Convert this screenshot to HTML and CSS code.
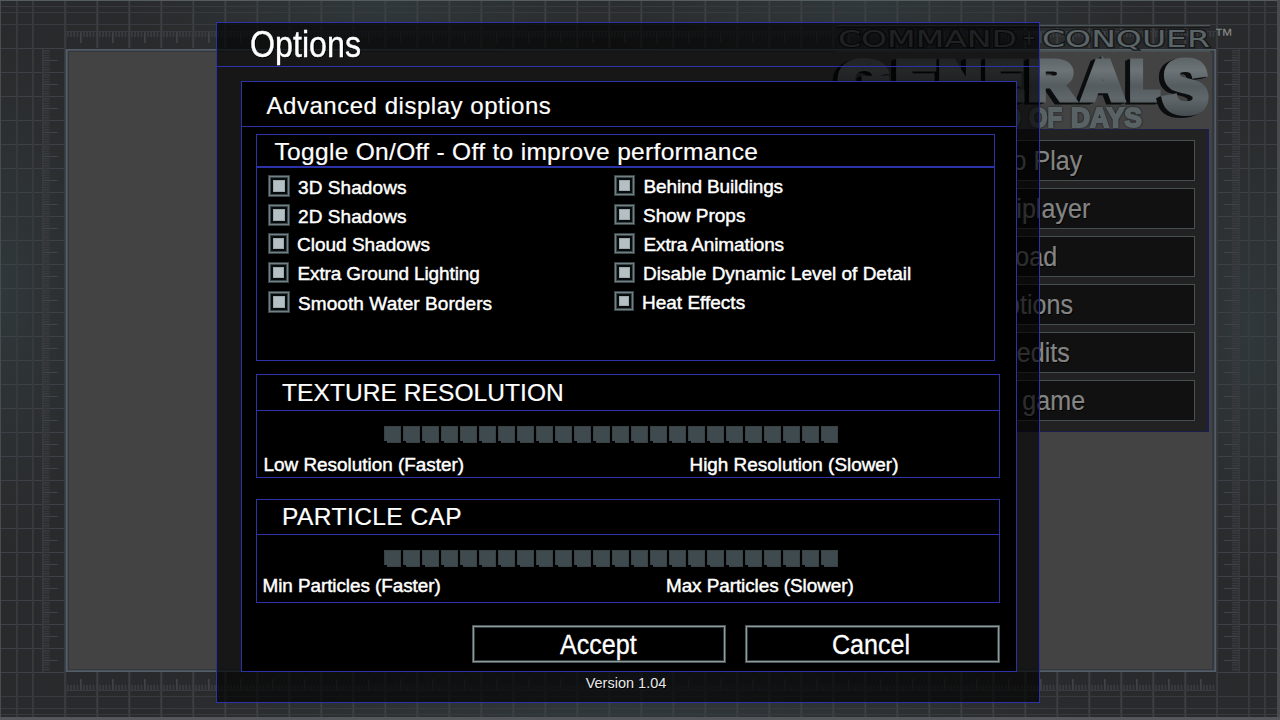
FILE: index.html
```html
<!DOCTYPE html>
<html lang="en">
<head>
<meta charset="utf-8">
<title>Options</title>
<link rel="stylesheet" href="styles.css">
</head>
<body>
<div class="screen">
  <svg class="backdrop" width="1280" height="720" viewBox="0 0 1280 720" aria-hidden="true">
    <defs>
      <pattern id="cols" x="64" y="0" width="32" height="48" patternUnits="userSpaceOnUse"><rect x="0.4" width="1.8" height="48" fill="#3c4043"/></pattern>
      <pattern id="rows" x="0" y="0" width="66" height="24" patternUnits="userSpaceOnUse"><rect width="66" height="1" fill="#3d4046"/></pattern>
      <pattern id="tickX" x="67" y="0" width="3.2" height="6" patternUnits="userSpaceOnUse"><rect width="1.6" height="6" fill="#393b40"/></pattern>
      <pattern id="bigX" x="80" y="0" width="32" height="720" patternUnits="userSpaceOnUse"><rect width="1.6" height="720" fill="#3f4248"/></pattern>
      <pattern id="tickY" x="0" y="50" width="8" height="2.4" patternUnits="userSpaceOnUse"><rect width="8" height="1.2" fill="#3a3c42"/></pattern>
      <pattern id="bigY" x="0" y="60" width="20" height="24" patternUnits="userSpaceOnUse"><rect width="20" height="1" fill="#40434a"/></pattern>
      <radialGradient id="tint" gradientUnits="userSpaceOnUse" cx="0" cy="0" r="1"><stop offset="0" stop-color="#30383b"/><stop offset="1" stop-color="#30383b" stop-opacity="0"/></radialGradient>
    </defs>
    <rect width="1280" height="720" fill="#292a2b"/>
    <g fill="url(#tint)">
      <circle r="1" transform="translate(380 0) scale(260 90)"/>
      <circle r="1" transform="translate(860 0) scale(300 90)"/>
      <circle r="1" transform="translate(0 290) scale(110 260)"/>
      <circle r="1" transform="translate(1250 330) scale(100 240)"/>
      <circle r="1" transform="translate(620 720) scale(480 80)"/>
    </g>
    <rect x="64" width="1154" height="48" fill="url(#cols)"/>
    <rect x="64" y="672" width="1154" height="48" fill="url(#cols)"/>
    <rect y="24" width="66" height="696" fill="url(#rows)"/>
    <rect x="1216" y="24" width="64" height="696" fill="url(#rows)"/>
    <g fill="#373b3f">
      <rect x="16" width="1.8" height="720"/><rect x="32" width="1.8" height="720"/><rect x="64" width="1.8" height="720"/>
      <rect x="1216" width="1.8" height="720"/><rect x="1248" width="1.8" height="720"/><rect x="1264" width="1.8" height="720"/>
      <rect y="6" width="1280" height="1"/><rect y="12" width="1280" height="1"/><rect y="24" width="1280" height="1"/>
      <rect y="696" width="1280" height="1"/><rect y="708" width="1280" height="1"/><rect y="714" width="1280" height="1"/>
      <rect x="65" y="31" width="1151" height="1"/><rect x="65" y="690" width="1151" height="1"/>
      <rect x="42" y="49" width="1.4" height="623"/><rect x="1238.5" y="49" width="1.4" height="623"/>
    </g>
    <rect x="67" y="32" width="1148" height="5" fill="url(#tickX)"/>
    <rect x="67" y="32" width="1148" height="11" fill="url(#bigX)"/>
    <rect x="67" y="685" width="1148" height="5" fill="url(#tickX)"/>
    <rect x="67" y="679" width="1148" height="11" fill="url(#bigX)"/>
    <rect x="43" y="50" width="6.5" height="621" fill="url(#tickY)"/>
    <rect x="43" y="50" width="14.5" height="621" fill="url(#bigY)"/>
    <rect x="1232" y="50" width="6.5" height="621" fill="url(#tickY)"/>
    <rect x="1224" y="50" width="14.5" height="621" fill="url(#bigY)"/>
    <rect width="1" height="720" fill="#484c4d"/><rect width="1280" height="1" fill="#565d5f"/>
    <rect x="1277" width="3" height="720" fill="#484b4e"/><rect y="717" width="1280" height="3" fill="#53565a"/>
    <rect x="65" y="49" width="1151" height="623" fill="#3b434b"/>
    <rect x="66.75" y="49.750" width="1148.500" height="621.500" fill="none" stroke="#545e68" stroke-width="1.5"/>
    <rect x="68" y="51" width="1146" height="619" fill="#34383c"/>
    <rect x="69" y="52" width="1143" height="617" fill="#434343"/>
  </svg>

  <aside class="main-menu">
    <svg class="logo" width="400" height="112" viewBox="834 20 400 112">
      <defs>
        <linearGradient id="metal" gradientUnits="userSpaceOnUse" x1="0" y1="55" x2="0" y2="117"><stop offset="0" stop-color="#5a6265"/><stop offset=".25" stop-color="#6c7477"/><stop offset=".5" stop-color="#555c5f"/><stop offset=".7" stop-color="#5f676a"/><stop offset="1" stop-color="#454c4f"/></linearGradient>
      </defs>
      <rect x="837" y="26.300" width="373" height="1.500" fill="#151617"/>
      <rect x="837" y="25" width="373" height="1.300" fill="#4f5658"/>
      <rect x="837" y="50.500" width="373" height="1.300" fill="#4f5658"/>
      <g class="logo-top">
        <text x="838" y="47" textLength="179" lengthAdjust="spacingAndGlyphs">COMMAND</text>
        <text x="1022" y="45" textLength="14" lengthAdjust="spacingAndGlyphs">+</text>
        <text x="1042" y="47" textLength="168" lengthAdjust="spacingAndGlyphs">CONQUER</text>
      </g>
      <text class="logo-tm" x="1214" y="41" textLength="19" lengthAdjust="spacingAndGlyphs">™</text>
      <g class="logo-main">
        <text x="839" y="98.500" textLength="50" lengthAdjust="spacingAndGlyphs">G</text>
        <text x="896" y="98.500" textLength="40" lengthAdjust="spacingAndGlyphs">E</text>
        <text x="939" y="98.500" textLength="42" lengthAdjust="spacingAndGlyphs">N</text>
        <text x="985" y="98.500" textLength="38" lengthAdjust="spacingAndGlyphs">E</text>
        <text x="1029" y="98.500" textLength="44" lengthAdjust="spacingAndGlyphs">R</text>
        <text x="1083" y="98.500" textLength="40" lengthAdjust="spacingAndGlyphs">A</text>
        <text x="1130" y="98.500" textLength="29" lengthAdjust="spacingAndGlyphs">L</text>
      </g>
      <text class="logo-s" x="1163" y="112" textLength="45" lengthAdjust="spacingAndGlyphs">S</text>
      <g class="logo-sub">
        <text x="977" y="127" textLength="44" lengthAdjust="spacingAndGlyphs">END</text>
        <text x="1029" y="127" textLength="33" lengthAdjust="spacingAndGlyphs">OF</text>
        <text x="1071" y="127" textLength="71" lengthAdjust="spacingAndGlyphs">DAYS</text>
      </g>
    </svg>
    <nav class="menu-panel">
      <div class="menu-button"><span class="narrow">Solo Play</span></div>
      <div class="menu-button"><span class="narrow">Multiplayer</span></div>
      <div class="menu-button"><span class="narrow">Load</span></div>
      <div class="menu-button"><span class="narrow">Options</span></div>
      <div class="menu-button"><span class="narrow">Credits</span></div>
      <div class="menu-button"><span class="narrow">Exit game</span></div>
    </nav>
  </aside>

  <main class="dialog">
    <h1 class="dialog-title"><span class="title-text">Options</span></h1>
    <section class="advanced">
      <h2 class="advanced-title">Advanced display options</h2>
      <div class="group toggles">
        <h3 class="group-title">Toggle On/Off - Off to improve performance</h3>
        <div class="toggle-columns">
          <div class="toggle-column">
            <label class="toggle"><i class="box"></i><span class="low">3D Shadows</span></label>
            <label class="toggle"><i class="box"></i><span class="low">2D Shadows</span></label>
            <label class="toggle"><i class="box small"></i><span>Cloud Shadows</span></label>
            <label class="toggle"><i class="box small"></i><span class="tight">Extra Ground Lighting</span></label>
            <label class="toggle"><i class="box"></i><span class="low">Smooth Water Borders</span></label>
          </div>
          <div class="toggle-column">
            <label class="toggle"><i class="box small"></i><span class="tight">Behind Buildings</span></label>
            <label class="toggle"><i class="box small"></i><span>Show Props</span></label>
            <label class="toggle"><i class="box small"></i><span class="tight">Extra Animations</span></label>
            <label class="toggle"><i class="box small"></i><span>Disable Dynamic Level of Detail</span></label>
            <label class="toggle"><i class="box tiny"></i><span>Heat Effects</span></label>
          </div>
        </div>
      </div>
      <div class="group texture">
        <h3 class="group-title">TEXTURE RESOLUTION</h3>
        <div class="meter"><i></i><i></i><i></i><i></i><i></i><i></i><i></i><i></i><i></i><i></i><i></i><i></i><i></i><i></i><i></i><i></i><i></i><i></i><i></i><i></i><i></i><i></i><i></i><i></i></div>
        <div class="range"><span class="range-min">Low Resolution (Faster)</span><span>High Resolution (Slower)</span></div>
      </div>
      <div class="group particles">
        <h3 class="group-title">PARTICLE CAP</h3>
        <div class="meter"><i></i><i></i><i></i><i></i><i></i><i></i><i></i><i></i><i></i><i></i><i></i><i></i><i></i><i></i><i></i><i></i><i></i><i></i><i></i><i></i><i></i><i></i><i></i><i></i></div>
        <div class="range"><span class="range-min">Min Particles (Faster)</span><span>Max Particles (Slower)</span></div>
      </div>
      <div class="actions">
        <div class="button accept"><span class="narrow">Accept</span></div>
        <div class="button cancel"><span class="narrow">Cancel</span></div>
      </div>
    </section>
    <footer class="version">Version 1.04</footer>
  </main>
</div>
</body>
</html>
```
FILE: styles.css
```css
* { box-sizing: border-box; }
body { margin: 0; background: #292a2b; color: #fff; font-family: "Liberation Sans", Arial, sans-serif; }
h1, h2, h3 { margin: 0; font-weight: 400; }

.screen { position: relative; width: 1280px; height: 720px; overflow: hidden; display: flex; justify-content: flex-end; }
.backdrop { position: absolute; left: 0; top: 0; }

.main-menu { position: relative; width: 446px; padding-top: 20px; display: flex; flex-direction: column; }
.logo { display: block; flex: none; height: 112px; margin-bottom: -3px; overflow: visible; }
.logo text { font-family: "Liberation Sans", Arial, sans-serif; font-weight: 700; }
.logo .logo-top text { font-family: "DejaVu Sans", sans-serif; font-weight: 400; font-size: 23px; fill: #5b6467; stroke: #17191a; stroke-width: 2.4px; paint-order: stroke; }
.logo .logo-tm { font-size: 18px; font-weight: 400; fill: #858787; }
.logo-main, .logo-s { filter: drop-shadow(-3px 1px 0 #0b0d0e) drop-shadow(-2px 1px 0 #0b0d0e); }
.logo-main text { font-size: 54px; fill: url(#metal); stroke: url(#metal); stroke-width: 7px; stroke-linejoin: miter; }
.logo .logo-s { font-size: 73px; fill: url(#metal); stroke: url(#metal); stroke-width: 7px; stroke-linejoin: miter; }
.logo-sub text { font-size: 28px; fill: #596265; stroke: #596265; stroke-width: 2px; }
.logo-sub { filter: drop-shadow(0 0 1px #16191a); }

.menu-panel { width: 359px; height: 303px; margin-left: 16px; padding: 10px 12px 0 14px; display: flex; flex-direction: column; gap: 7px; background: #222; border-top: 1px solid #1c1e42; border-right: 2px solid #1b1d56; border-bottom: 1px solid #1b1d4a; }
.menu-button { height: 41px; border: 1px solid #465052; background: #111; display: flex; justify-content: center; color: #858585; font-size: 27px; line-height: 40px; text-shadow: 1px 1px 0 #000; -webkit-text-stroke: .2px #858585; }
.narrow { display: inline-block; transform: translateX(.3px) scaleX(.93); }

.dialog { position: absolute; left: 216px; top: 22px; width: 824px; height: 681px; border: 1px solid #2c32a8; background: rgba(0, 0, 0, .66); }
.dialog-title { height: 44px; padding-left: 33px; border-bottom: 1px solid #2c32a8; font-size: 36px; line-height: 43px; text-shadow: 1px 1px 0 #000; }
.title-text { display: inline-block; transform: scaleX(.895); transform-origin: left; -webkit-text-stroke: .4px #fff; }

.advanced { width: 776px; height: 591px; margin: 14px 0 0 24px; border: 1px solid #2c32a8; background: #000; display: flex; flex-direction: column; padding-left: 14px; }
.advanced-title { height: 45px; margin-left: -14px; padding-left: 24.5px; border-bottom: 1px solid #2c32a8; font-size: 24px; line-height: 47px; letter-spacing: .53px; -webkit-text-stroke: .2px #fff; }

.group { border: 1px solid #2c32a8; width: 744px; height: 104px; }
.group-title { height: 36px; padding-left: 25px; border-bottom: 1px solid #2c32a8; font-size: 24.5px; line-height: 35px; letter-spacing: .08px; white-space: nowrap; -webkit-text-stroke: .2px #fff; }
.toggles { width: 739px; height: 227px; margin-top: 7px; }
.toggles .group-title { height: 33px; padding-left: 17.5px; border-bottom-width: 2px; line-height: 33px; letter-spacing: .32px; }
.texture { margin-top: 13px; }
.particles { margin-top: 21px; }
.particles .group-title { height: 35px; line-height: 33px; letter-spacing: .45px; }

.toggle-columns { display: grid; grid-template-columns: 346px auto; padding: 7px 0 0 11px; }
.toggle { display: flex; align-items: flex-start; gap: 8px; height: 29px; font-size: 19px; line-height: 23px; letter-spacing: 0; -webkit-text-stroke: .45px #fff; white-space: nowrap; }
.tight { letter-spacing: -.13px; padding-left: .5px; }
.low { padding-top: 1px; letter-spacing: .08px; }
.box { flex: none; width: 22px; height: 22px; border: 1px solid #39474a; background: #b4c0c4; box-shadow: inset 0 0 0 1px #728083, inset 0 0 0 2px #3b484b, inset 0 0 0 4px #080b0c, inset 0 0 0 5px #9da9ad; }
.small { width: 21px; height: 21px; }
.tiny { width: 20px; height: 20px; }

.meter { display: flex; gap: 2px; margin: 15px 0 0 127px; height: 17px; }
.meter i { width: 17px; height: 17px; background: #3f4a4e; border: 1px solid #384245; clip-path: polygon(0 0, 100% 0, 100% 100%, 3px 100%, 3px 15px, 0 15px); }
.range { display: flex; margin-top: 9px; padding-left: 6.5px; font-size: 18.9px; line-height: 25px; -webkit-text-stroke: .45px #fff; white-space: nowrap; }
.range-min { width: 426px; }
.particles .range { margin-top: 6px; padding-left: 5.5px; letter-spacing: -.06px; }
.particles .range-min { width: 403.5px; }

.actions { display: flex; gap: 19px; margin: 22px 0 0 216px; }
.button { width: 254px; height: 38px; border: 1px solid #4b595c; box-shadow: inset 0 0 0 1px #909b9d, inset 0 0 0 2px #2f3a3d; display: flex; justify-content: center; font-size: 27px; line-height: 38px; -webkit-text-stroke: .3px #fff; }
.button .narrow { transform: translateX(-1px) scaleX(.93); }
.cancel { width: 255px; }
.version { padding-right: 4px; text-align: center; font-size: 14.5px; line-height: 22px; color: #e8e8e8; text-shadow: 1px 1px 0 #000; }
```
